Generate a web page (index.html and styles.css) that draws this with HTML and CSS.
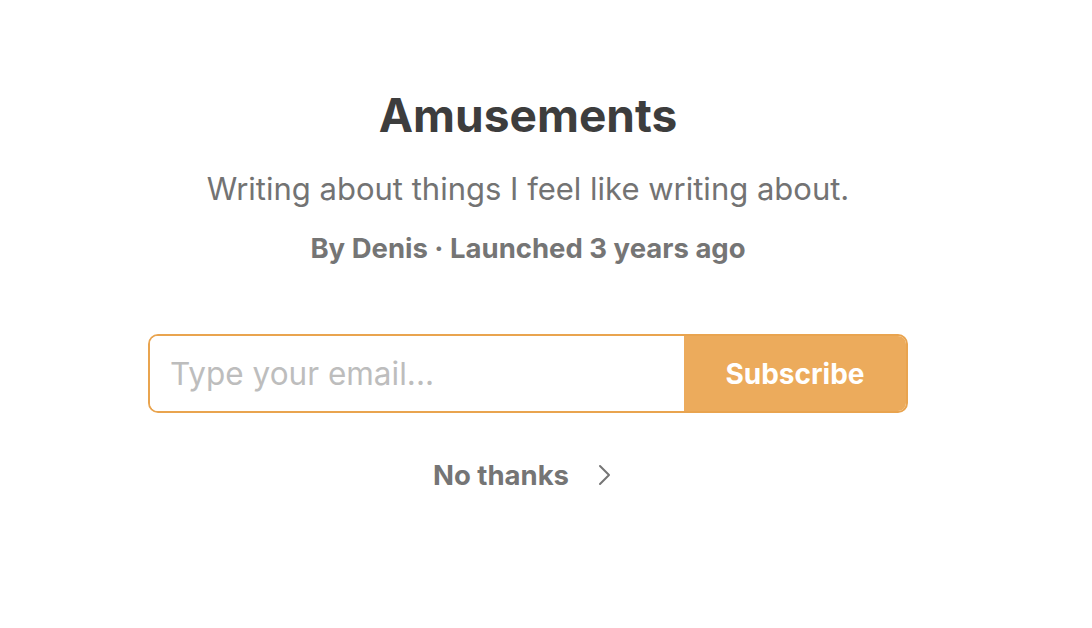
FILE: index.html
```html
<!DOCTYPE html>
<html lang="en">
<head>
    <meta charset="UTF-8">
    <meta name="viewport" content="width=device-width, initial-scale=1.0">
    <title>Amusements</title>
    <link rel="stylesheet" href="styles.css">
</head>
<body>
    <div class="welcome">
        <h1 class="pub-name">Amusements</h1>
        <p class="pub-tagline">Writing about things I feel like writing about.</p>
        <p class="pub-meta">By Denis · Launched 3 years ago</p>

        <form class="subscribe-form">
            <input type="email" class="email-input" placeholder="Type your email...">
            <button type="button" class="subscribe-button">Subscribe</button>
        </form>

        <a href="#" class="no-thanks">
            No thanks
            <svg class="chevron" width="14" height="24" viewBox="0 0 14 24" fill="none" stroke="currentColor" stroke-width="2" stroke-linecap="round" stroke-linejoin="round">
                <polyline points="3,3 12,12 3,21"></polyline>
            </svg>
        </a>
    </div>
</body>
</html>
```

FILE: styles.css
```css
body {
    margin: 0;
    padding: 0;
    background-color: #fff;
    font-family: Inter, "Noto Sans", sans-serif;
}

.welcome {
    width: 1056px;
    display: flex;
    flex-direction: column;
    align-items: center;
    padding-top: 86px;
}

.pub-name {
    margin: 0;
    font-size: 46px;
    font-weight: 700;
    color: #3d3d3d;
    line-height: 58px;
}

.pub-tagline {
    margin: 26px 0 0;
    font-size: 31px;
    line-height: 38px;
    color: #737373;
}

.pub-meta {
    margin: 24px 0 0;
    font-size: 27.5px;
    font-weight: 700;
    line-height: 32px;
    color: #757575;
}

.subscribe-form {
    display: flex;
    width: 760px;
    height: 79px;
    margin-top: 70px;
    box-sizing: border-box;
    border: 2px solid #e9a44f;
    border-radius: 10px;
    overflow: hidden;
}

.email-input {
    flex: 1;
    border: none;
    outline: none;
    padding: 0 20px;
    font-family: inherit;
    font-size: 31.5px;
    color: #333;
    background: #fff;
}

.email-input::placeholder {
    color: #bdbdbd;
}

.subscribe-button {
    width: 222px;
    border: none;
    background-color: #ecab5c;
    color: #fff;
    font-family: inherit;
    font-size: 28px;
    font-weight: 700;
    cursor: pointer;
}

.no-thanks {
    display: flex;
    align-items: center;
    gap: 28px;
    margin-top: 45px;
    font-size: 27.5px;
    font-weight: 700;
    color: #757575;
    text-decoration: none;
}

.chevron {
    margin-right: 12px;
}
```
